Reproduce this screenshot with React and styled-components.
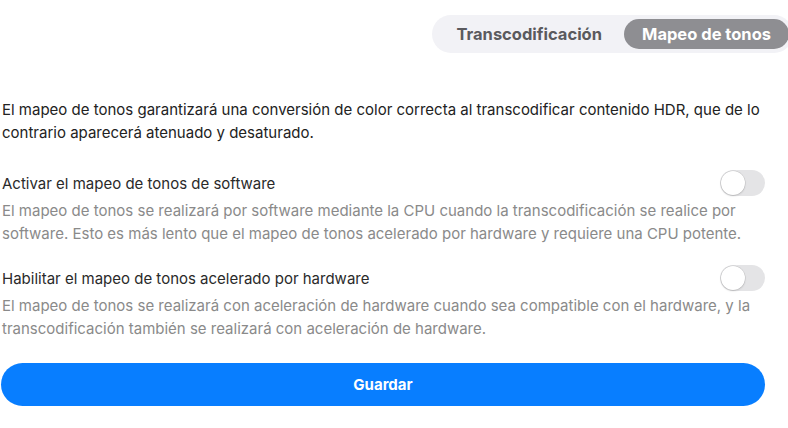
import React from "react";
import styled, { createGlobalStyle } from "styled-components";

const Global = createGlobalStyle`
  html, body { margin: 0; padding: 0; background: #fff; overflow: hidden; }
  body { font-family: Inter, "Noto Sans", sans-serif; -webkit-font-smoothing: antialiased; }
`;

const Page = styled.div`
  width: 788px;
  height: 428px;
  box-sizing: border-box;
  padding: 15px 0 0 2px;
  display: flex;
  flex-direction: column;
`;

const TabsRow = styled.div`
  display: flex;
  justify-content: flex-end;
  margin-right: -5px;
`;

const Tabs = styled.div`
  display: flex;
  align-items: center;
  gap: 4px;
  height: 38px;
  box-sizing: border-box;
  padding: 4px;
  background: #f2f2f6;
  border-radius: 19px;
`;

const Tab = styled.div`
  height: 30px;
  padding: ${(p) => (p.$active ? "0 18px" : "0 18px 0 20px")};
  border-radius: 15px;
  display: flex;
  align-items: center;
  font-size: 16.5px;
  font-weight: 700;
  color: ${(p) => (p.$active ? "#fff" : "#5a5a5e")};
  background: ${(p) => (p.$active ? "#8e8e92" : "transparent")};
`;

const Content = styled.div`
  width: 763px;
  display: flex;
  flex-direction: column;
`;

const Intro = styled.p`
  margin: 45px 0 0;
  font-size: 15px;
  line-height: 23px;
  color: #222;
`;

const Setting = styled.div`
  display: flex;
  flex-direction: column;
  margin-top: ${(p) => p.$top}px;
`;

const LabelRow = styled.div`
  display: flex;
  align-items: center;
  justify-content: space-between;
`;

const Label = styled.span`
  font-size: 15px;
  line-height: 23px;
  color: #2a2a2a;
`;

const Desc = styled.p`
  margin: 3px 0 0;
  font-size: 15px;
  line-height: 23px;
  color: #8a8a8a;
`;

const Switch = styled.div`
  width: 45px;
  height: 26px;
  border-radius: 13px;
  background: #e4e4e6;
  position: relative;
  flex-shrink: 0;
`;

const Knob = styled.span`
  position: absolute;
  left: 1px;
  top: 1px;
  width: 24px;
  height: 24px;
  border-radius: 50%;
  background: #fff;
  box-shadow: 0 0 0 0.5px rgba(0, 0, 0, 0.12), 0 1px 2px rgba(0, 0, 0, 0.15);
`;

const SaveButton = styled.button`
  margin-top: 23px;
  height: 43px;
  width: 764px;
  margin-left: -1px;
  border: none;
  border-radius: 22px;
  background: #087eff;
  color: #fff;
  font-family: Inter, "Noto Sans", sans-serif;
  font-size: 15px;
  font-weight: 700;
`;

const Toggle = () => (
  <Switch>
    <Knob />
  </Switch>
);

export default function App() {
  return (
    <>
      <Global />
      <Page>
        <TabsRow>
          <Tabs>
            <Tab>Transcodificación</Tab>
            <Tab $active>Mapeo de tonos</Tab>
          </Tabs>
        </TabsRow>
        <Content>
          <Intro>
            El mapeo de tonos garantizará una conversión de color correcta al transcodificar contenido HDR, que de lo
            <br />
            contrario aparecerá atenuado y desaturado.
          </Intro>
          <Setting $top={26}>
            <LabelRow>
              <Label>Activar el mapeo de tonos de software</Label>
              <Toggle />
            </LabelRow>
            <Desc>
              El mapeo de tonos se realizará por software mediante la CPU cuando la transcodificación se realice por
              <br />
              software. Esto es más lento que el mapeo de tonos acelerado por hardware y requiere una CPU potente.
            </Desc>
          </Setting>
          <Setting $top={20}>
            <LabelRow>
              <Label>Habilitar el mapeo de tonos acelerado por hardware</Label>
              <Toggle />
            </LabelRow>
            <Desc>
              El mapeo de tonos se realizará con aceleración de hardware cuando sea compatible con el hardware, y la
              <br />
              transcodificación también se realizará con aceleración de hardware.
            </Desc>
          </Setting>
          <SaveButton>Guardar</SaveButton>
        </Content>
      </Page>
    </>
  );
}
